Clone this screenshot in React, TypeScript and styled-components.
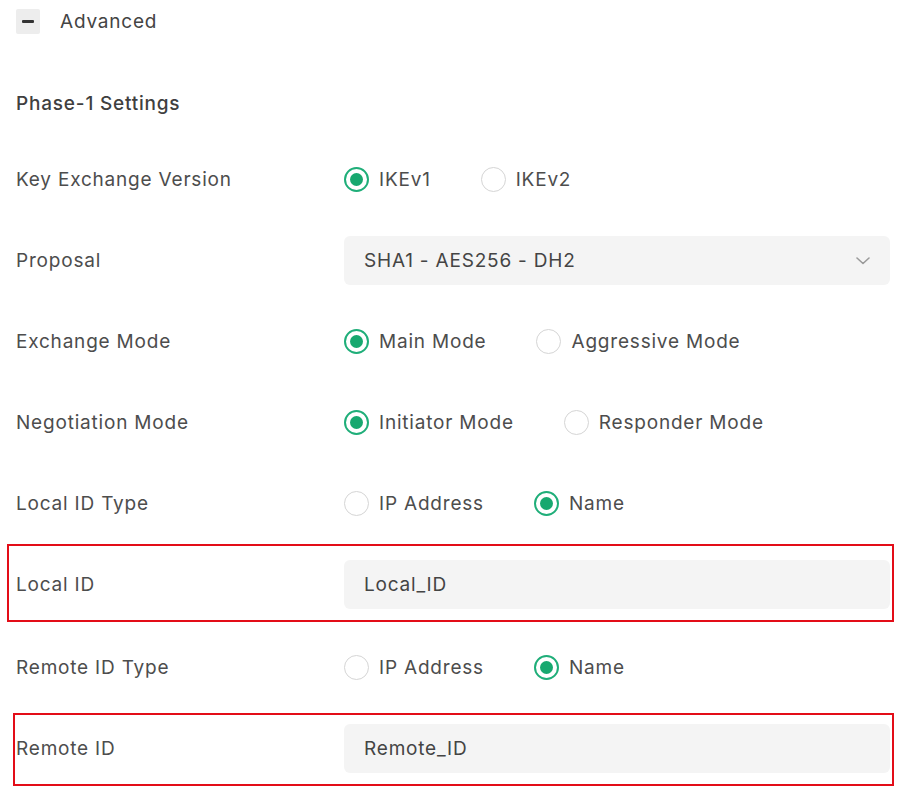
import styled, { createGlobalStyle } from 'styled-components';

const GlobalStyle = createGlobalStyle`
  body {
    margin: 0;
    background: #ffffff;
    font-family: Inter, "Noto Sans", sans-serif;
    color: #4a4a4a;
    letter-spacing: 0.8px;
  }
`;

const Page = styled.div`
  padding: 9px 13px 24px 16px;
  width: 874px;
`;

const Header = styled.div`
  display: flex;
  align-items: center;
  gap: 20px;
  height: 25px;
`;

const Toggle = styled.button`
  width: 24px;
  height: 25px;
  border: none;
  padding: 0;
  border-radius: 2px;
  background: #ededed;
  display: flex;
  align-items: center;
  justify-content: center;
  cursor: pointer;

  &::before {
    content: '';
    width: 12px;
    height: 3px;
    border-radius: 1px;
    background: #333;
  }
`;

const HeaderText = styled.span`
  font-size: 19px;
  color: #444;
`;

const SectionTitle = styled.h2`
  margin: 58px 0 0;
  font-size: 19px;
  line-height: 24px;
  font-weight: 500;
  color: #3f3f3f;
`;

const Form = styled.div`
  display: flex;
  flex-direction: column;
  gap: 32px;
  margin-top: 39px;
`;

const Row = styled.div`
  display: grid;
  grid-template-columns: 328px 546px;
  align-items: center;
  height: 49px;
`;

const Label = styled.span`
  font-size: 19px;
  color: #4d4d4d;
`;

const Options = styled.div`
  display: flex;
  align-items: center;
  gap: 50px;
`;

const Option = styled.label`
  display: flex;
  align-items: center;
  gap: 10px;
  font-size: 19px;
  color: #4d4d4d;
  cursor: pointer;
`;

const Dot = styled.span<{ $on: boolean }>`
  box-sizing: border-box;
  width: 25px;
  height: 25px;
  border-radius: 50%;
  border: ${(p) => (p.$on ? '2px solid #1fae79' : '1.5px solid #d5d5d5')};
  display: flex;
  align-items: center;
  justify-content: center;

  &::after {
    content: '';
    display: ${(p) => (p.$on ? 'block' : 'none')};
    width: 13px;
    height: 13px;
    border-radius: 50%;
    background: #17a86f;
  }
`;

const Field = styled.div`
  box-sizing: border-box;
  height: 49px;
  border-radius: 6px;
  background: #f4f4f4;
  padding: 0 20px;
  display: flex;
  align-items: center;
  justify-content: space-between;
  font-size: 19px;
  color: #444;
`;

const Highlight = styled.div<{ $top: number; $bottom: number; $left: number; $right: number }>`
  border: 2px solid #e30d18;
  margin: ${(p) => `-${p.$top}px -${p.$right}px -${p.$bottom}px -${p.$left}px`};
  padding: ${(p) => `${p.$top - 2}px ${p.$right - 2}px ${p.$bottom - 2}px ${p.$left - 2}px`};
`;

type RadioRowProps = { label: string; options: string[]; selected: number };

function RadioRow({ label, options, selected }: RadioRowProps) {
  return (
    <Row>
      <Label>{label}</Label>
      <Options>
        {options.map((o, i) => (
          <Option key={o}>
            <Dot $on={i === selected} />
            {o}
          </Option>
        ))}
      </Options>
    </Row>
  );
}

function Chevron() {
  return (
    <svg width="14" height="8" viewBox="0 0 14 8" fill="none">
      <polyline points="1,1 7,6.5 13,1" stroke="#9a9a9a" strokeWidth="1.6" strokeLinecap="round" strokeLinejoin="round" />
    </svg>
  );
}

export default function App() {
  return (
    <>
      <GlobalStyle />
      <Page>
        <Header>
          <Toggle aria-label="collapse" />
          <HeaderText>Advanced</HeaderText>
        </Header>
        <SectionTitle>Phase-1 Settings</SectionTitle>
        <Form>
          <RadioRow label="Key Exchange Version" options={['IKEv1', 'IKEv2']} selected={0} />
          <Row>
            <Label>Proposal</Label>
            <Field>
              SHA1 - AES256 - DH2
              <Chevron />
            </Field>
          </Row>
          <RadioRow label="Exchange Mode" options={['Main Mode', 'Aggressive Mode']} selected={0} />
          <RadioRow label="Negotiation Mode" options={['Initiator Mode', 'Responder Mode']} selected={0} />
          <RadioRow label="Local ID Type" options={['IP Address', 'Name']} selected={1} />
          <Highlight $top={16} $bottom={13} $left={9} $right={4} style={{ marginBottom: -11 }}>
            <Row>
              <Label>Local ID</Label>
              <Field>Local_ID</Field>
            </Row>
          </Highlight>
          <RadioRow label="Remote ID Type" options={['IP Address', 'Name']} selected={1} />
          <Highlight $top={11} $bottom={13} $left={3} $right={4}>
            <Row>
              <Label>Remote ID</Label>
              <Field>Remote_ID</Field>
            </Row>
          </Highlight>
        </Form>
      </Page>
    </>
  );
}
